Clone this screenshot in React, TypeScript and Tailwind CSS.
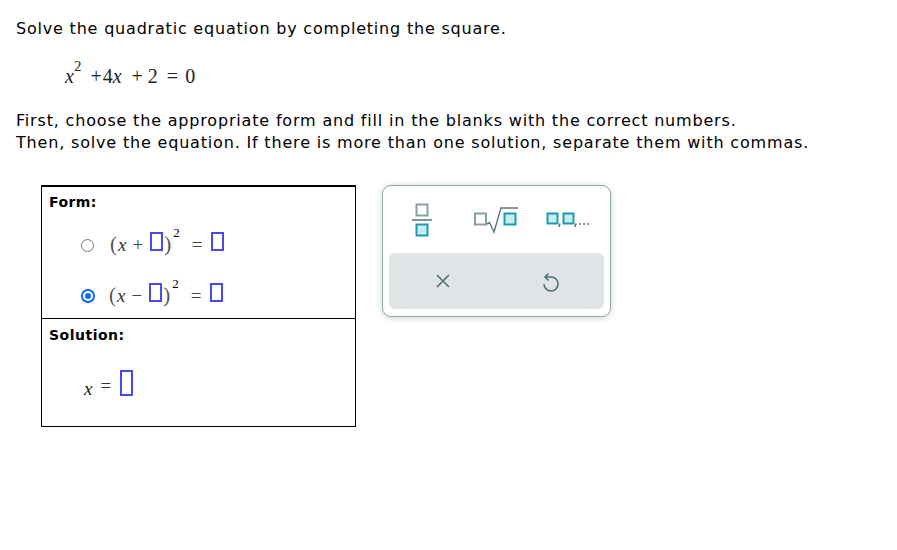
import React from "react";

const sans = { fontFamily: '"DejaVu Sans", Verdana, sans-serif' };
const serif = { fontFamily: '"Liberation Serif", "Times New Roman", serif' };

function Blank({ h = 19 }: { h?: number }) {
  return (
    <span
      className="inline-block w-[13px] border-2 border-[#4848f4] bg-white"
      style={{ height: h }}
    />
  );
}

function Radio({ checked }: { checked?: boolean }) {
  if (checked) {
    return (
      <span className="flex h-[14px] w-[14px] items-center justify-center rounded-full border-2 border-[#0b6cf0] bg-white">
        <span className="h-[6px] w-[6px] rounded-full bg-[#0b6cf0]" />
      </span>
    );
  }
  return <span className="block h-[13px] w-[13px] rounded-full border border-[#777] bg-white" />;
}

function FractionIcon() {
  return (
    <svg width="22" height="34" viewBox="0 0 22 34">
      <rect x="5.5" y="1.5" width="11" height="11" fill="none" stroke="#8aa0a8" strokeWidth="2" />
      <line x1="1" y1="17" x2="21" y2="17" stroke="#5f7a83" strokeWidth="1.6" />
      <rect x="5.5" y="21.5" width="11" height="11" fill="#c9ecf1" stroke="#1a9cb0" strokeWidth="2" />
    </svg>
  );
}

function SqrtIcon() {
  return (
    <svg width="46" height="28" viewBox="0 0 46 28">
      <rect x="2" y="7.5" width="11" height="11" fill="none" stroke="#8aa0a8" strokeWidth="2" />
      <path d="M14 18 L16.5 16.5 L21 26 L28 2 H45" fill="none" stroke="#5f7a83" strokeWidth="1.5" />
      <rect x="31.5" y="7.5" width="11" height="11" fill="#c9ecf1" stroke="#1a9cb0" strokeWidth="2" />
    </svg>
  );
}

function ListIcon() {
  return (
    <svg width="46" height="18" viewBox="0 0 46 18">
      <rect x="1.5" y="2.5" width="10" height="10" fill="#c9ecf1" stroke="#1a9cb0" strokeWidth="2" />
      <path d="M14 12.5 L13 16" stroke="#4d6a74" strokeWidth="1.4" />
      <rect x="17.5" y="2.5" width="10" height="10" fill="#c9ecf1" stroke="#1a9cb0" strokeWidth="2" />
      <path d="M30 12.5 L29 16" stroke="#4d6a74" strokeWidth="1.4" />
      <circle cx="34" cy="13" r="0.9" fill="#4d6a74" />
      <circle cx="38" cy="13" r="0.9" fill="#4d6a74" />
      <circle cx="42" cy="13" r="0.9" fill="#4d6a74" />
    </svg>
  );
}

function XIcon() {
  return (
    <svg width="14" height="14" viewBox="0 0 14 14">
      <path d="M1 1 L13 13 M13 1 L1 13" stroke="#4f6e79" strokeWidth="1.6" />
    </svg>
  );
}

function UndoIcon() {
  return (
    <svg width="17" height="22" viewBox="0 0 17 22">
      <path d="M3 7 H9 A7 7 0 1 1 2 14" fill="none" stroke="#4f6e79" strokeWidth="1.6" />
      <path d="M6.5 3.5 L3 7 L6.5 10.5" fill="none" stroke="#4f6e79" strokeWidth="1.6" />
    </svg>
  );
}

export default function App() {
  return (
    <div className="h-[550px] w-[897px] bg-white text-black" style={sans}>
      <div className="pl-[16px] pt-[18px]">
        <div className="text-[16px] leading-[22px] tracking-[0.8px]">
          Solve the quadratic equation by completing the square.
        </div>

        <div className="mt-[21px] flex h-[30px] items-center pl-[49px] text-[20px] text-[#222]" style={serif}>
          <span className="italic">x</span>
          <span className="relative -top-[10px] ml-[0px] text-[15px]">2</span>
          <span className="ml-[9px]">+</span>
          <span className="ml-[1px]">4</span>
          <span className="italic">x</span>
          <span className="ml-[10px]">+</span>
          <span className="ml-[5px]">2</span>
          <span className="ml-[9px]">=</span>
          <span className="ml-[7px]">0</span>
        </div>

        <div className="mt-[19px] text-[16px] leading-[22px] tracking-[0.82px]">
          <div>First, choose the appropriate form and fill in the blanks with the correct numbers.</div>
          <div>Then, solve the equation. If there is more than one solution, separate them with commas.</div>
        </div>

        <div className="mt-[31px] flex items-start">
          <div className="ml-[25px] w-[315px] border border-t-2 border-black">
            <div className="h-[132px] border-b border-black pl-[7px] pt-[5px]">
              <div className="text-[14px] font-bold leading-[20px] tracking-[0.4px]">Form:</div>
              <div className="mt-[18px] flex h-[30px] items-center pl-[32px]" style={serif}>
                <Radio />
                <span className="ml-[16px] text-[21px] text-[#555]">(</span>
                <span className="ml-[1px] text-[19px] italic text-[#333]">x</span>
                <span className="ml-[6px] text-[19px] text-[#444]">+</span>
                <span className="ml-[7px]"><Blank /></span>
                <span className="ml-[1px] text-[21px] text-[#555]">)</span>
                <span className="relative -top-[12px] ml-[2px] text-[13px]">2</span>
                <span className="ml-[12px] text-[19px] text-[#444]">=</span>
                <span className="ml-[9px]"><Blank /></span>
              </div>
              <div className="mt-[21px] flex h-[30px] items-center pl-[32px]" style={serif}>
                <Radio checked />
                <span className="ml-[14px] text-[21px] text-[#555]">(</span>
                <span className="ml-[1px] text-[19px] italic text-[#333]">x</span>
                <span className="ml-[6px] text-[19px] text-[#444]">−</span>
                <span className="ml-[7px]"><Blank /></span>
                <span className="ml-[1px] text-[21px] text-[#555]">)</span>
                <span className="relative -top-[12px] ml-[2px] text-[13px]">2</span>
                <span className="ml-[12px] text-[19px] text-[#444]">=</span>
                <span className="ml-[9px]"><Blank /></span>
              </div>
            </div>
            <div className="h-[107px] pl-[7px] pt-[6px]">
              <div className="text-[14px] font-bold leading-[20px] tracking-[0.5px]">Solution:</div>
              <div className="mt-[28px] flex h-[26px] items-center pl-[35px]" style={serif}>
                <span className="relative top-[3px] text-[19px] italic text-[#222]">x</span>
                <span className="ml-[8px] text-[19px] text-[#333]">=</span>
                <span className="ml-[9px]"><Blank h={26} /></span>
              </div>
            </div>
          </div>

          <div className="ml-[26px] flex h-[132px] w-[229px] flex-col rounded-[9px] border border-[#93a7ae] bg-white shadow-[0_1px_6px_rgba(0,0,0,0.18)]">
            <div className="grid h-[67px] grid-cols-3 items-center px-[6px]">
              <div className="flex justify-center pr-[5px]"><FractionIcon /></div>
              <div className="flex justify-center"><SqrtIcon /></div>
              <div className="flex justify-center pl-[2px]"><ListIcon /></div>
            </div>
            <div className="mx-[6px] grid h-[56px] grid-cols-2 items-center rounded-[6px] bg-[#dfe5e7]">
              <div className="flex justify-center"><XIcon /></div>
              <div className="flex justify-center"><UndoIcon /></div>
            </div>
          </div>
        </div>
      </div>
    </div>
  );
}
